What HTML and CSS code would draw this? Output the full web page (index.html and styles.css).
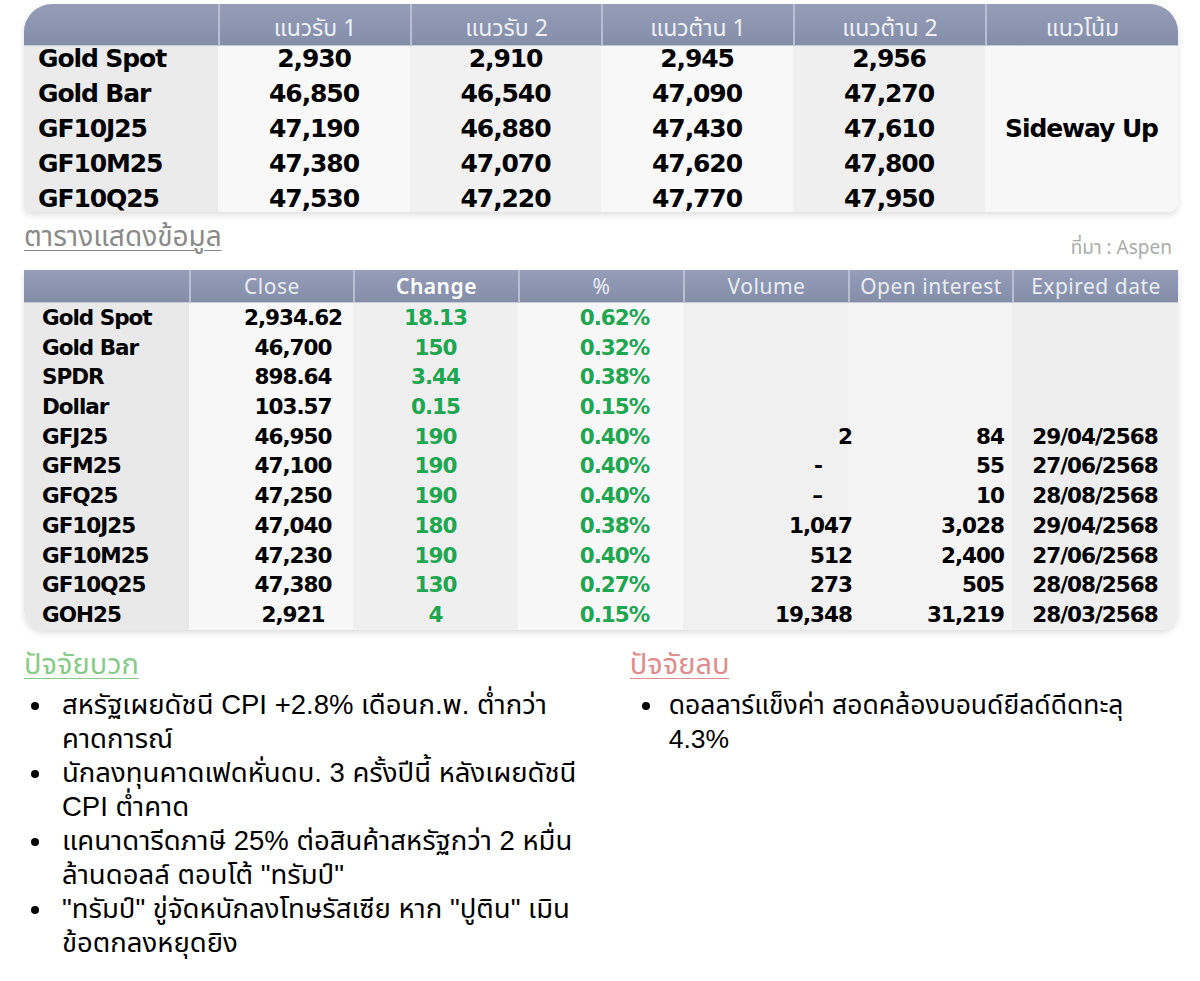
FILE: index.html
```html
<!DOCTYPE html>
<html lang="th">
<head>
<meta charset="utf-8">
<title>Gold</title>
<link rel="stylesheet" href="styles.css">
</head>
<body>
<div class="page">
  <div class="t1">
    <div class="h h0"></div>
    <div class="h">แนวรับ 1</div>
    <div class="h">แนวรับ 2</div>
    <div class="h">แนวต้าน 1</div>
    <div class="h">แนวต้าน 2</div>
    <div class="h">แนวโน้ม</div>

    <div class="n">Gold Spot</div><div class="v">2,930</div><div class="v">2,910</div><div class="v">2,945</div><div class="v">2,956</div>
    <div class="trend">Sideway Up</div>
    <div class="n">Gold Bar</div><div class="v">46,850</div><div class="v">46,540</div><div class="v">47,090</div><div class="v">47,270</div>
    <div class="n">GF10J25</div><div class="v">47,190</div><div class="v">46,880</div><div class="v">47,430</div><div class="v">47,610</div>
    <div class="n">GF10M25</div><div class="v">47,380</div><div class="v">47,070</div><div class="v">47,620</div><div class="v">47,800</div>
    <div class="n">GF10Q25</div><div class="v">47,530</div><div class="v">47,220</div><div class="v">47,770</div><div class="v">47,950</div>
  </div>

  <div class="caption">
    <span class="title">ตารางแสดงข้อมูล</span>
    <span class="src">ที่มา : Aspen</span>
  </div>

  <div class="t2">
    <div class="h h0"></div>
    <div class="h">Close</div>
    <div class="h hb">Change</div>
    <div class="h">%</div>
    <div class="h">Volume</div>
    <div class="h">Open interest</div>
    <div class="h">Expired date</div>

    <div class="n">Gold Spot</div><div class="cl">2,934.62</div><div class="ch">18.13</div><div class="pc">0.62%</div><div class="vo"></div><div class="oi"></div><div class="ex"></div>
    <div class="n">Gold Bar</div><div class="cl">46,700</div><div class="ch">150</div><div class="pc">0.32%</div><div class="vo"></div><div class="oi"></div><div class="ex"></div>
    <div class="n">SPDR</div><div class="cl">898.64</div><div class="ch">3.44</div><div class="pc">0.38%</div><div class="vo"></div><div class="oi"></div><div class="ex"></div>
    <div class="n">Dollar</div><div class="cl">103.57</div><div class="ch">0.15</div><div class="pc">0.15%</div><div class="vo"></div><div class="oi"></div><div class="ex"></div>
    <div class="n">GFJ25</div><div class="cl">46,950</div><div class="ch">190</div><div class="pc">0.40%</div><div class="vo">2</div><div class="oi">84</div><div class="ex">29/04/2568</div>
    <div class="n">GFM25</div><div class="cl">47,100</div><div class="ch">190</div><div class="pc">0.40%</div><div class="vo dash">-</div><div class="oi">55</div><div class="ex">27/06/2568</div>
    <div class="n">GFQ25</div><div class="cl">47,250</div><div class="ch">190</div><div class="pc">0.40%</div><div class="vo dash">–</div><div class="oi">10</div><div class="ex">28/08/2568</div>
    <div class="n">GF10J25</div><div class="cl">47,040</div><div class="ch">180</div><div class="pc">0.38%</div><div class="vo">1,047</div><div class="oi">3,028</div><div class="ex">29/04/2568</div>
    <div class="n">GF10M25</div><div class="cl">47,230</div><div class="ch">190</div><div class="pc">0.40%</div><div class="vo">512</div><div class="oi">2,400</div><div class="ex">27/06/2568</div>
    <div class="n">GF10Q25</div><div class="cl">47,380</div><div class="ch">130</div><div class="pc">0.27%</div><div class="vo">273</div><div class="oi">505</div><div class="ex">28/08/2568</div>
    <div class="n">GOH25</div><div class="cl">2,921</div><div class="ch">4</div><div class="pc">0.15%</div><div class="vo">19,348</div><div class="oi">31,219</div><div class="ex">28/03/2568</div>
  </div>

  <div class="factors">
    <div class="fcol pos">
      <h3 class="fh">ปัจจัยบวก</h3>
      <ul class="list">
        <li>สหรัฐเผยดัชนี CPI +2.8% เดือนก.พ. ต่ำกว่า<br>คาดการณ์</li>
        <li>นักลงทุนคาดเฟดหั่นดบ. 3 ครั้งปีนี้ หลังเผยดัชนี<br>CPI ต่ำคาด</li>
        <li>แคนาดารีดภาษี 25% ต่อสินค้าสหรัฐกว่า 2 หมื่น<br>ล้านดอลล์ ตอบโต้ "ทรัมป์"</li>
        <li>"ทรัมป์" ขู่จัดหนักลงโทษรัสเซีย หาก "ปูติน" เมิน<br>ข้อตกลงหยุดยิง</li>
      </ul>
    </div>
    <div class="fcol neg">
      <h3 class="fh">ปัจจัยลบ</h3>
      <ul class="list">
        <li>ดอลลาร์แข็งค่า สอดคล้องบอนด์ยีลด์ดีดทะลุ<br>4.3%</li>
      </ul>
    </div>
  </div>
</div>
</body>
</html>
```

FILE: styles.css
```css
* { box-sizing: border-box; }
html, body { margin: 0; padding: 0; background: #ffffff; }
body {
  font-family: "Liberation Sans", "Noto Sans Thai", "Noto Sans Thai UI", "Loma", "Garuda", "Waree", sans-serif;
  color: #000;
}
.page { width: 1200px; padding: 4px 22px 0 24px; }

/* ---------- table 1 ---------- */
.t1 {
  display: grid;
  grid-template-columns: 194px 192px 191px 192px 192px 193px;
  grid-template-rows: 42px 35px 35px 35px 35px 26px;
  width: 1154px;
  border-radius: 28px 28px 10px 6px;
  overflow: hidden;
  box-shadow: 0 3px 6px rgba(0,0,0,0.13);
  background: linear-gradient(to right,
    #ebebeb 0 194px, #f8f8f8 194px 386px, #f1f1f1 386px 577px,
    #f8f8f8 577px 769px, #efefef 769px 961px, #f7f7f7 961px);
}
.h {
  background: linear-gradient(#959db7, #858ea9);
  color: #eef0f6;
  font-family: "Noto Sans Thai", "Noto Sans Thai UI", "Loma", "Garuda", "DejaVu Sans", sans-serif;
  font-size: 20px;
  display: flex;
  align-items: center;
  justify-content: center;
  border-left: 2px solid #b9bfd1;
  border-bottom: 1px solid #c7cbd8;
}
.h0 { border-left: none; }
.t1 .h {
  font-size: 23px;
  padding-top: 8px;
}
.t1 .n, .t1 .v, .t1 .trend {
  font-family: "DejaVu Sans", sans-serif;
  font-weight: bold;
  font-size: 25px;
  letter-spacing: -1.1px;
  line-height: 26px;
  white-space: nowrap;
}
.t1 .n { padding-left: 14px; }
.t1 .v { text-align: center; }
.t1 .trend {
  grid-column: 6;
  grid-row: 2 / 7;
  display: flex;
  align-items: center;
  justify-content: center;
}

/* ---------- caption ---------- */
.caption {
  height: 58px;
  display: flex;
  justify-content: space-between;
  align-items: flex-start;
  width: 1154px;
}
.title {
  margin-top: 8px;
  font-family: "Noto Sans Thai", "Noto Sans Thai UI", "Loma", "Garuda", sans-serif;
  font-size: 28px;
  line-height: 36px;
  color: #8a8a8a;
  text-decoration: underline;
  text-decoration-thickness: 1px;
  text-underline-offset: 4px;
}
.src {
  margin-top: 24px;
  margin-right: 6px;
  font-family: "Noto Sans Thai", "Noto Sans", sans-serif;
  font-size: 19px;
  line-height: 26px;
  color: #ababab;
}

/* ---------- table 2 ---------- */
.t2 {
  display: grid;
  grid-template-columns: 165px 164px 165px 165px 165px 164px 166px;
  grid-template-rows: 33px repeat(11, 29.7px);
  width: 1154px;
  border-radius: 0 0 18px 20px;
  overflow: hidden;
  box-shadow: 0 3px 6px rgba(0,0,0,0.13);
  background: linear-gradient(to right,
    #e9e9e9 0 165px, #f7f7f7 165px 329px, #efefef 329px 494px,
    #f7f7f7 494px 659px, #f0f0f0 659px 824px, #f4f4f4 824px 988px, #eeeeee 988px);
}
.t2 .h {
  font-family: "Noto Sans", "DejaVu Sans", sans-serif;
  font-size: 21px;
  letter-spacing: 0.5px;
  color: #e9ecf3;
}
.t2 .hb { font-weight: 600; color: #ffffff; }
.t2 > div:not(.h) {
  font-family: "DejaVu Sans", sans-serif;
  font-weight: bold;
  font-size: 21.5px;
  letter-spacing: -1px;
  line-height: 29.7px;
  white-space: nowrap;
}
.t2 .n { padding-left: 18px; }
.t2 .cl { text-align: center; padding-left: 44px; }
.t2 .ch { text-align: center; color: #1fa651; }
.t2 .pc { text-align: center; padding-left: 28px; color: #1fa651; }
.t2 .vo { text-align: right; margin-right: -4px; }
.t2 .vo.dash { padding-right: 30px; }
.t2 .oi { text-align: right; padding-right: 8px; }
.t2 .ex { text-align: center; }

/* ---------- factors ---------- */
.factors {
  display: flex;
  padding-top: 18px;
}
.fcol { width: 606px; }
.fcol.neg { width: 560px; }
.fh {
  margin: 0;
  font-weight: normal;
  font-family: "Noto Sans Thai", "Noto Sans Thai UI", "Loma", "Garuda", sans-serif;
  font-size: 29px;
  line-height: 34px;
  text-decoration: underline;
  text-decoration-thickness: 1px;
  text-underline-offset: 4px;
}
.pos .fh { color: #86cc86; }
.neg .fh { color: #e08c8c; margin-left: 6px; }
.list {
  list-style: none;
  margin: 6px 0 0 0;
  padding: 0;
}
.list li {
  position: relative;
  padding-left: 38px;
  font-size: 27.5px;
  line-height: 34px;
}
.list li::before {
  content: "";
  position: absolute;
  left: 7px;
  top: 14px;
  width: 8px;
  height: 8px;
  border-radius: 50%;
  background: #000;
}
.neg .list li::before { left: 18px; }
.neg .list li { padding-left: 45px; }
.neg .list li { font-size: 26.5px; }
```
